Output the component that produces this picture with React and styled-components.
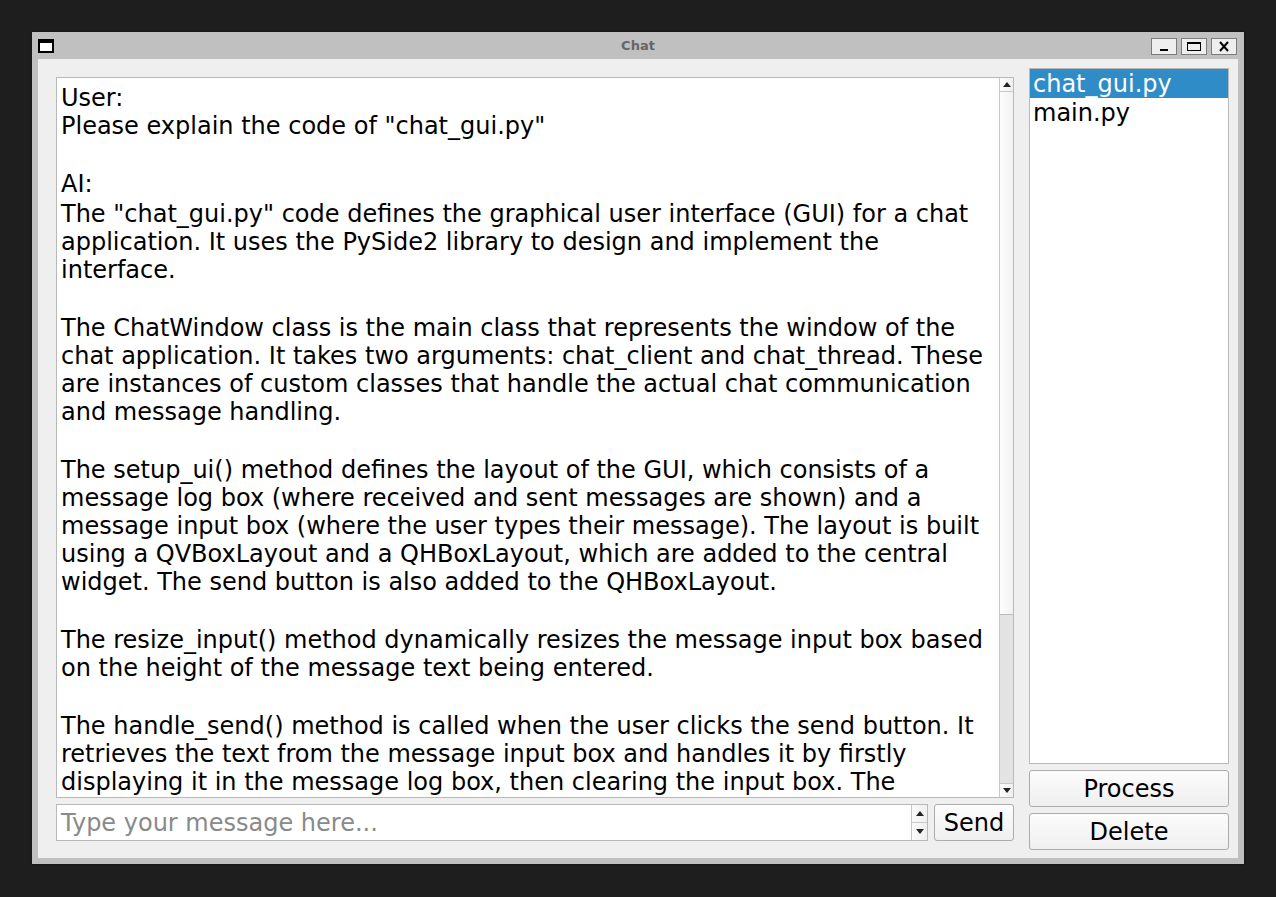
import React from "react";
import styled, { createGlobalStyle } from "styled-components";

const Global = createGlobalStyle`
  html, body { margin: 0; padding: 0; background: #1e1e1e; }
  body { font-family: "DejaVu Sans", "Liberation Sans", sans-serif; }
  * { box-sizing: border-box; }
`;

const Page = styled.div`
  width: 1276px;
  height: 897px;
  padding: 32px 0 0 32px;
  background: #1e1e1e;
`;

const Window = styled.div`
  width: 1212px;
  height: 832px;
  background: #c0c0c0;
  display: flex;
  flex-direction: column;
  padding: 0 6px 6px 6px;
  box-shadow: 0 0 2px rgba(0, 0, 0, 0.6);
`;

const TitleBar = styled.div`
  flex: none;
  height: 27px;
  display: grid;
  grid-template-columns: 1fr auto 1fr;
  align-items: center;
`;

const AppIcon = styled.div`
  width: 16px;
  height: 14px;
  border: 2px solid #000;
  border-top-width: 4px;
  background: #fff;
  margin-top: 1px;
`;

const Title = styled.div`
  font-family: "DejaVu Sans", sans-serif;
  font-weight: bold;
  font-size: 13px;
  color: #666;
`;

const Controls = styled.div`
  justify-self: end;
  display: flex;
  gap: 4px;
  margin-top: 1px;
  margin-right: 1px;
`;

const CtrlButton = styled.div`
  width: 26px;
  height: 17px;
  background: #eeeeee;
  border: 1px solid #7c7c7c;
  display: flex;
  align-items: center;
  justify-content: center;
`;

const Content = styled.div`
  flex: 1;
  min-height: 0;
  background: #efefef;
  display: flex;
  padding: 9px 9px 8px 9px;
  gap: 6px;
`;

const LeftCol = styled.div`
  flex: 1;
  min-height: 0;
  display: flex;
  flex-direction: column;
  gap: 6px;
  padding: 9px;
`;

const TextArea = styled.div`
  flex: 1;
  min-height: 0;
  background: #fff;
  border: 1px solid #b9b9b9;
  display: flex;
  overflow: hidden;
`;

const TextBody = styled.div`
  flex: 1;
  padding: 6px 4px 4px 4px;
  overflow: hidden;
  font-size: 24px;
  color: #000;
`;

const Line = styled.div`
  height: ${(p) => p.$h || 28}px;
  line-height: 28px;
  white-space: pre;
`;

const ScrollBar = styled.div`
  width: 14px;
  flex: none;
  border-left: 1px solid #c8c8c8;
  background: #e3e3e3;
  display: flex;
  flex-direction: column;
`;

const ScrollBtn = styled.div`
  height: 14px;
  flex: none;
  background: linear-gradient(to right, #fbfbfb, #efefef);
  border-${(p) => (p.$down ? "top" : "bottom")}: 1px solid #c8c8c8;
  display: flex;
  align-items: center;
  justify-content: center;
`;

const Thumb = styled.div`
  height: 523px;
  flex: none;
  background: linear-gradient(to right, #fdfdfd, #f1f1f1);
  border-bottom: 1px solid #bcbcbc;
`;

const Track = styled.div`
  flex: 1;
`;

const InputRow = styled.div`
  height: 37px;
  flex: none;
  display: flex;
  gap: 6px;
`;

const InputBox = styled.div`
  flex: 1;
  background: #fff;
  border: 1px solid #b9b9b9;
  display: flex;
`;

const Placeholder = styled.div`
  flex: 1;
  padding: 2px 0 0 4px;
  font-size: 24px;
  line-height: 33px;
  color: #8a8a8a;
  white-space: nowrap;
  overflow: hidden;
`;

const Spin = styled.div`
  width: 16px;
  border-left: 1px solid #c8c8c8;
  display: flex;
  flex-direction: column;
  background: linear-gradient(to right, #fbfbfb, #efefef);
`;

const SpinHalf = styled.div`
  flex: 1;
  display: flex;
  align-items: center;
  justify-content: center;
  border-top: ${(p) => (p.$second ? "1px solid #c8c8c8" : "none")};
`;

const Button = styled.div`
  width: ${(p) => p.$w || "auto"};
  height: 37px;
  border: 1px solid #acacac;
  border-radius: 3px;
  background: linear-gradient(#fcfcfc, #efefef);
  font-size: 24px;
  color: #000;
  display: flex;
  align-items: center;
  justify-content: center;
  flex: none;
`;

const RightCol = styled.div`
  width: 200px;
  flex: none;
  display: flex;
  flex-direction: column;
  gap: 6px;
`;

const List = styled.div`
  flex: 1;
  background: #fff;
  border: 1px solid #b9b9b9;
`;

const Item = styled.div`
  height: 29px;
  line-height: 27px;
  padding: 2px 0 0 3px;
  font-size: 24px;
  background: ${(p) => (p.$selected ? "#308cc6" : "transparent")};
  color: ${(p) => (p.$selected ? "#fff" : "#000")};
`;

const Arrow = ({ down }) => (
  <svg width="8" height="5" viewBox="0 0 8 5">
    <polygon points={down ? "0,0 8,0 4,5" : "0,5 8,5 4,0"} fill="#222" />
  </svg>
);

const lines = [
  ["User:"],
  ['Please explain the code of "chat_gui.py"'],
  ["", 30],
  ["AI:", 30],
  ['The "chat_gui.py" code defines the graphical user interface (GUI) for a chat'],
  ["application. It uses the PySide2 library to design and implement the"],
  ["interface."],
  ["", 30],
  ["The ChatWindow class is the main class that represents the window of the"],
  ["chat application. It takes two arguments: chat_client and chat_thread. These"],
  ["are instances of custom classes that handle the actual chat communication"],
  ["and message handling."],
  ["", 30],
  ["The setup_ui() method defines the layout of the GUI, which consists of a"],
  ["message log box (where received and sent messages are shown) and a"],
  ["message input box (where the user types their message). The layout is built"],
  ["using a QVBoxLayout and a QHBoxLayout, which are added to the central"],
  ["widget. The send button is also added to the QHBoxLayout."],
  ["", 30],
  ["The resize_input() method dynamically resizes the message input box based"],
  ["on the height of the message text being entered."],
  ["", 30],
  ["The handle_send() method is called when the user clicks the send button. It"],
  ["retrieves the text from the message input box and handles it by firstly"],
  ["displaying it in the message log box, then clearing the input box. The"],
];

export default function App() {
  return (
    <Page>
      <Global />
      <Window>
        <TitleBar>
          <AppIcon />
          <Title>Chat</Title>
          <Controls>
            <CtrlButton>
              <svg width="14" height="12" viewBox="0 0 14 12">
                <rect x="3" y="9" width="8" height="2" fill="#000" />
              </svg>
            </CtrlButton>
            <CtrlButton>
              <svg width="16" height="11" viewBox="0 0 16 11">
                <rect x="1.5" y="1.5" width="13" height="8" fill="none" stroke="#000" strokeWidth="1" />
                <rect x="1" y="1" width="14" height="2" fill="#000" />
              </svg>
            </CtrlButton>
            <CtrlButton>
              <svg width="12" height="11" viewBox="0 0 12 11">
                <path d="M2 1 L10 10 M10 1 L2 10" stroke="#000" strokeWidth="2" />
              </svg>
            </CtrlButton>
          </Controls>
        </TitleBar>
        <Content>
          <LeftCol>
            <TextArea>
              <TextBody>
                {lines.map(([t, h], i) => (
                  <Line key={i} $h={h}>
                    {t}
                  </Line>
                ))}
              </TextBody>
              <ScrollBar>
                <ScrollBtn>
                  <Arrow />
                </ScrollBtn>
                <Thumb />
                <Track />
                <ScrollBtn $down>
                  <Arrow down />
                </ScrollBtn>
              </ScrollBar>
            </TextArea>
            <InputRow>
              <InputBox>
                <Placeholder>Type your message here...</Placeholder>
                <Spin>
                  <SpinHalf>
                    <Arrow />
                  </SpinHalf>
                  <SpinHalf $second>
                    <Arrow down />
                  </SpinHalf>
                </Spin>
              </InputBox>
              <Button $w="80px">Send</Button>
            </InputRow>
          </LeftCol>
          <RightCol>
            <List>
              <Item $selected>chat_gui.py</Item>
              <Item>main.py</Item>
            </List>
            <Button>Process</Button>
            <Button>Delete</Button>
          </RightCol>
        </Content>
      </Window>
    </Page>
  );
}
